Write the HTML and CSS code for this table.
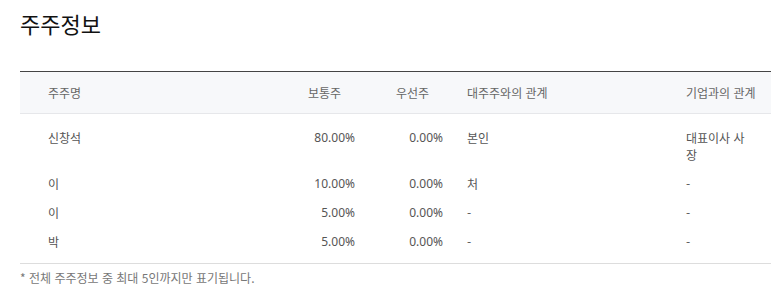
FILE: index.html
```html
<!DOCTYPE html>
<html lang="ko">
<head>
<meta charset="utf-8">
<link rel="stylesheet" href="styles.css">
</head>
<body>
<div class="page">
  <h2 class="title">주주정보</h2>
  <table class="holders">
    <colgroup>
      <col class="c-name"><col class="c-common"><col class="c-pref"><col class="c-rel"><col class="c-corp">
    </colgroup>
    <thead>
      <tr>
        <th class="name">주주명</th>
        <th class="num">보통주</th>
        <th class="num">우선주</th>
        <th>대주주와의 관계</th>
        <th>기업과의 관계</th>
      </tr>
    </thead>
    <tbody>
      <tr>
        <td class="name">신창석</td>
        <td class="num">80.00%</td>
        <td class="num">0.00%</td>
        <td>본인</td>
        <td class="corp">대표이사 사장</td>
      </tr>
      <tr>
        <td class="name">이</td>
        <td class="num">10.00%</td>
        <td class="num">0.00%</td>
        <td>처</td>
        <td class="corp">-</td>
      </tr>
      <tr>
        <td class="name">이</td>
        <td class="num">5.00%</td>
        <td class="num">0.00%</td>
        <td>-</td>
        <td class="corp">-</td>
      </tr>
      <tr>
        <td class="name">박</td>
        <td class="num">5.00%</td>
        <td class="num">0.00%</td>
        <td>-</td>
        <td class="corp">-</td>
      </tr>
    </tbody>
  </table>
  <p class="note">* 전체 주주정보 중 최대 5인까지만 표기됩니다.</p>
</div>
</body>
</html>
```

FILE: styles.css
```css
html, body {
  margin: 0;
  padding: 0;
  background: #fff;
}
body {
  font-family: "Noto Sans CJK KR", "Noto Sans", sans-serif;
  color: #555;
}
.page {
  padding: 0 11px 0 20px;
}
.title {
  margin: 0;
  padding-top: 8px;
  font-size: 22px;
  line-height: 30px;
  font-weight: 400;
  color: #111;
}
.holders {
  margin-top: 33px;
  width: 751px;
  border-collapse: collapse;
  table-layout: fixed;
  font-size: 12px;
  line-height: 17px;
}
.c-name { width: 247px; }
.c-common { width: 100px; }
.c-pref { width: 88px; }
.c-rel { width: 219px; }
.c-corp { width: 97px; }
.holders thead tr {
  background: #f7f8fa;
  border-top: 1px solid #444;
  border-bottom: 1px solid #e6e7ea;
}
.holders th {
  font-weight: 400;
  color: #666;
  text-align: left;
  padding: 12px 12px;
  height: 17px;
}
.holders th.num {
  text-align: right;
  padding-right: 26px;
}
.holders th.name, .holders td.name {
  padding-left: 28px;
}
.holders td {
  padding: 6px 12px;
  vertical-align: top;
  color: #555;
}
.holders td.corp {
  padding-right: 22px;
}
.holders td.num {
  text-align: right;
  font-family: "Noto Sans", sans-serif;
}
.holders tbody tr:first-child td {
  padding-top: 15px;
}
.holders tbody tr:last-child td {
  padding-bottom: 13px;
}
.holders tbody {
  border-bottom: 1px solid #ddd;
}
.note {
  margin: 5px 0 0;
  font-size: 12px;
  line-height: 17px;
  color: #777;
}
```
